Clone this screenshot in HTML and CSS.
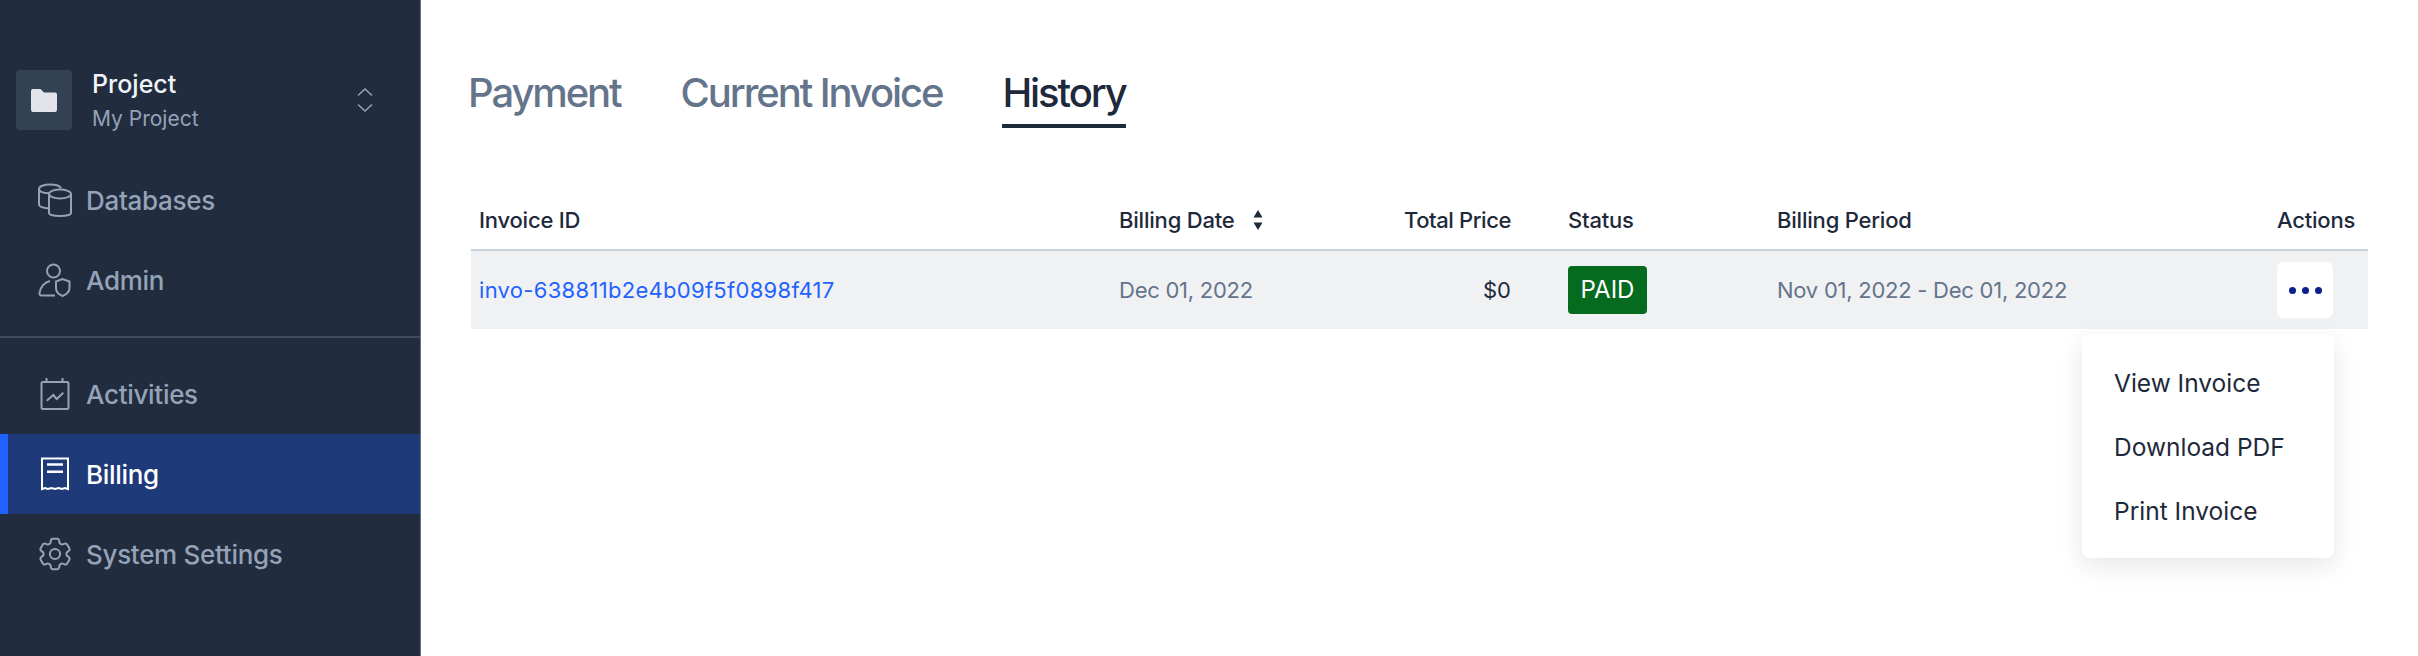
FILE: index.html
```html
<!DOCTYPE html>
<html>
<head>
    <title>Billing</title>
    <meta name="viewport" content="width=device-width, initial-scale=1.0">
    <link rel="stylesheet" href="styles.css">
</head>
<body>
    <div class="sidebar">
        <div class="project">
            <div class="project-icon">
                <svg width="26" height="23" viewBox="0 0 26 23"><path d="M2 0h7.500l3.500 3.500h11a2 2 0 0 1 2 2V21a2 2 0 0 1-2 2H2a2 2 0 0 1-2-2V2a2 2 0 0 1 2-2z" fill="#e2e4e9"/></svg>
            </div>
            <div class="project-text">
                <div class="project-name">Project</div>
                <div class="project-sub">My Project</div>
            </div>
            <svg class="chevrons" width="16" height="24" viewBox="0 0 16 24"><path d="M1 7.500L8 1l7 6.500M1 16.500L8 23l7-6.500" fill="none" stroke="#94a3b8" stroke-width="1.500"/></svg>
        </div>

        <a class="nav-item">
            <svg class="nav-icon" viewBox="0 0 34 34"><path d="M11 25.500C5 25 1 23.500 1 21.500V6C1 3.200 6 1.500 12 1.500c5.500 0 10 1.300 11 3.800M1 6c0 2.500 4.500 4 10 4.300" /><ellipse cx="22" cy="11" rx="11" ry="4.500"/><path d="M11 11v19c0 1.800 5 3 11 3s11-1.200 11-3V11"/></svg>
            <span>Databases</span>
        </a>
        <a class="nav-item">
            <svg class="nav-icon" viewBox="0 0 34 34"><circle cx="15.500" cy="8" r="6.500"/><path d="M12 18c-5 1-10 6-10.500 12-.1 1.500.5 2.500 2 2.500H17"/><path d="M18 18.500l6.500-2.500 7 2.500v6.500c0 3.500-3 6.500-7 8-4-1.500-6.500-4.500-6.500-8z"/></svg>
            <span>Admin</span>
        </a>

        <div class="divider"></div>

        <a class="nav-item">
            <svg class="nav-icon" viewBox="0 0 34 34"><rect x="3.500" y="5" width="27" height="27" rx="1.500"/><path d="M8.500 1v5M24.500 1v5M8.700 23.700l6.600-5.700 3.400 4 6.600-6.300"/></svg>
            <span>Activities</span>
        </a>
        <a class="nav-item active">
            <svg class="nav-icon" viewBox="0 0 34 34"><path d="M4 32V1.500h26V32l-3-1-3 1-3.500-1-3.500 1-3.500-1-3.500 1-3-1z"/><path d="M9 7.500h16M9 14.700h16" stroke-width="2.500"/></svg>
            <span>Billing</span>
        </a>
        <a class="nav-item">
            <svg class="nav-icon" viewBox="2 2 20 20"><path stroke-width="1.200" d="M9.594 3.940c.09-.542.56-.94 1.110-.94h2.593c.55 0 1.020.398 1.110.94l.213 1.281c.063.374.313.686.645.870.074.040.147.083.22.127.324.196.72.257 1.075.124l1.217-.456a1.125 1.125 0 011.370.490l1.296 2.247a1.125 1.125 0 01-.26 1.431l-1.003.827c-.293.240-.438.613-.431.992a6.759 6.759 0 010 .255c-.007.378.138.75.43.99l1.005.828c.424.35.534.954.26 1.430l-1.298 2.247a1.125 1.125 0 01-1.369.491l-1.217-.456c-.355-.133-.75-.072-1.076.124a6.570 6.570 0 01-.22.128c-.331.183-.581.495-.644.869l-.213 1.280c-.09.543-.56.941-1.110.941h-2.594c-.55 0-1.020-.398-1.110-.94l-.213-1.281c-.062-.374-.312-.686-.644-.87a6.520 6.520 0 01-.22-.127c-.325-.196-.72-.257-1.076-.124l-1.217.456a1.125 1.125 0 01-1.369-.49l-1.297-2.247a1.125 1.125 0 01.26-1.431l1.004-.827c.292-.24.437-.613.43-.992a6.932 6.932 0 010-.255c.007-.378-.138-.75-.43-.99l-1.004-.828a1.125 1.125 0 01-.26-1.430l1.297-2.247a1.125 1.125 0 011.370-.491l1.216.456c.356.133.751.072 1.076-.124.072-.044.146-.087.22-.128.332-.183.582-.495.644-.869l.214-1.281z"/><circle stroke-width="1.200" cx="12" cy="12" r="3"/></svg>
            <span>System Settings</span>
        </a>
    </div>

    <div class="main">
        <div class="tabs">
            <a class="tab">Payment</a>
            <a class="tab">Current Invoice</a>
            <a class="tab active">History</a>
        </div>

        <div class="table-wrap">
            <table>
                <colgroup>
                    <col class="col-id">
                    <col class="col-date">
                    <col class="col-price">
                    <col class="col-status">
                    <col class="col-period">
                    <col class="col-actions">
                </colgroup>
                <thead>
                    <tr>
                        <th>Invoice ID</th>
                        <th>
                            <span class="sortable">Billing Date
                                <svg width="10" height="20" viewBox="0 0 10 20"><path d="M5 0l4.500 7.500h-9zM5 20L.5 12.500h9z" fill="#1e293b"/></svg>
                            </span>
                        </th>
                        <th class="right">Total Price</th>
                        <th class="status">Status</th>
                        <th>Billing Period</th>
                        <th>Actions</th>
                    </tr>
                </thead>
                <tbody>
                    <tr>
                        <td><a class="invoice-link">invo-638811b2e4b09f5f0898f417</a></td>
                        <td class="muted">Dec 01, 2022</td>
                        <td class="right">$0</td>
                        <td class="status"><span class="badge">PAID</span></td>
                        <td class="muted">Nov 01, 2022 - Dec 01, 2022</td>
                        <td>
                            <button class="more">
                                <i></i><i></i><i></i>
                            </button>
                        </td>
                    </tr>
                </tbody>
            </table>

            <div class="menu">
                <a>View Invoice</a>
                <a>Download PDF</a>
                <a>Print Invoice</a>
            </div>
        </div>
    </div>
</body>
</html>
```

FILE: styles.css
```css
* {
    box-sizing: border-box;
}

html, body {
    height: 100%;
}

body {
    margin: 0;
    display: flex;
    font-family: Inter, "Liberation Sans", sans-serif;
    background-color: #fff;
    color: #1e293b;
    overflow: hidden;
}

.sidebar {
    width: 421px;
    flex-shrink: 0;
    padding-top: 70px;
    background-color: #212c3e;
    border-right: 1px solid #64748b;
}

.project {
    display: flex;
    align-items: center;
    height: 60px;
    margin: 0 47px 30px 16px;
}

.project-icon {
    width: 56px;
    height: 60px;
    display: flex;
    align-items: center;
    justify-content: center;
    background-color: #334155;
    border-radius: 4px;
}

.project-text {
    margin-left: 20px;
    padding-top: 5px;
    flex: 1;
}

.project-name {
    font-size: 25px;
    line-height: 34px;
    font-weight: 500;
    margin-top: -2px;
    color: #f1f5f9;
}

.project-sub {
    font-size: 21px;
    line-height: 36px;
    color: #94a3b8;
}

.nav-item {
    display: flex;
    align-items: center;
    gap: 14px;
    height: 80px;
    padding-left: 38px;
    font-size: 26px;
    font-weight: 500;
    letter-spacing: -0.3px;
    color: #94a3b8;
}

.nav-icon {
    width: 34px;
    height: 34px;
    fill: none;
    stroke: #94a3b8;
    stroke-width: 2;
}

.nav-item.active {
    padding-left: 30px;
    color: #fff;
    background-color: #1e3a78;
    border-left: 8px solid #1f62ff;
}

.nav-item.active .nav-icon {
    stroke: #fff;
}

.divider {
    height: 2px;
    margin: 16px 0;
    background-color: #3f4b5d;
}

.main {
    flex: 1;
    padding: 69px 50px 0;
    min-width: 0;
}

.tabs {
    display: flex;
    gap: 60px;
    margin-left: -3px;
}

.tab {
    font-size: 40px;
    line-height: 48px;
    font-weight: 500;
    letter-spacing: -2.1px;
    padding-bottom: 7px;
    border-bottom: 4px solid transparent;
    color: #64748b;
}

.tab.active {
    color: #1e293b;
    border-bottom-color: #1e293b;
}

.table-wrap {
    position: relative;
    margin-top: 64px;
}

table {
    width: 100%;
    table-layout: fixed;
    border-collapse: collapse;
    font-size: 22px;
}

.col-id { width: 640px; }
.col-date { width: 201px; }
.col-price { width: 207px; }
.col-status { width: 250px; }
.col-period { width: 500px; }
.col-actions { width: 99px; }

th {
    height: 58px;
    padding: 0 8px 2px;
    text-align: left;
    font-weight: 500;
    letter-spacing: -0.2px;
    color: #1e293b;
    border-bottom: 2px solid #cbd5e1;
}

th.right {
    letter-spacing: -0.4px;
}

td {
    height: 79px;
    padding: 0 8px;
    background-color: #f0f1f3;
}

.right {
    text-align: right;
}

.status {
    padding-left: 49px;
}

.muted {
    color: #64748b;
    letter-spacing: -0.25px;
}

.sortable {
    display: flex;
    align-items: center;
    gap: 18px;
}

.invoice-link {
    color: #1f62ff;
    letter-spacing: 0.3px;
}

.badge {
    display: inline-block;
    width: 79px;
    height: 48px;
    line-height: 48px;
    text-align: center;
    vertical-align: middle;
    color: #fff;
    background-color: #056b1f;
    border-radius: 4px;
    font-size: 24px;
    font-weight: 400;
}

.more {
    display: flex;
    align-items: center;
    justify-content: center;
    gap: 6px;
    width: 56px;
    height: 56px;
    padding: 0;
    border: none;
    border-radius: 6px;
    background-color: #fff;
}

.more i {
    width: 7px;
    height: 7px;
    border-radius: 50%;
    background-color: #0a1f8a;
}

/* dropdown opened from the row's ... button */
.menu {
    position: absolute;
    top: 142px;
    right: 34px;
    width: 252px;
    padding: 17px 32px 15px;
    background-color: #fff;
    border-radius: 8px;
    box-shadow: 0 8px 24px rgba(15, 23, 42, 0.1);
}

.menu a {
    display: block;
    height: 64px;
    line-height: 64px;
    font-size: 24.500px;
    color: #1e293b;
    white-space: nowrap;
}
```
